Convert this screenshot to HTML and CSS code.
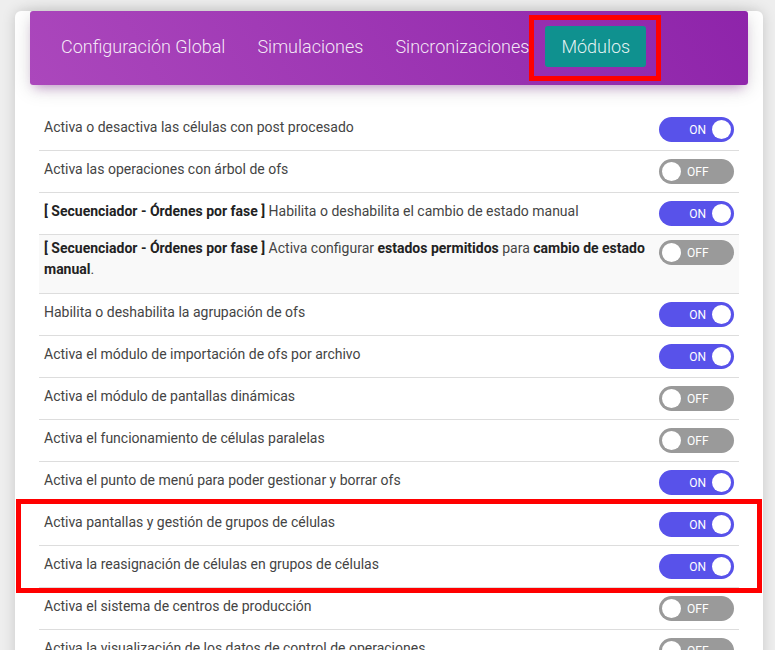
FILE: index.html
```html
<!DOCTYPE html>
<html lang="es">
<head>
<meta charset="utf-8">
<title>Módulos</title>
<link rel="stylesheet" href="styles.css">
</head>
<body>
<div class="card">
  <div class="card-header">
    <nav class="tabs">
      <a class="tab">Configuración Global</a>
      <a class="tab">Simulaciones</a>
      <a class="tab">Sincronizaciones</a>
      <a class="tab active">Módulos<span class="mark mark-tab"></span></a>
    </nav>
  </div>
  <div class="card-body">
    <div class="row"><div class="label">Activa o desactiva las células con post procesado</div><span class="toggle on"><span class="t-text">ON</span><span class="knob"></span></span></div>
    <div class="row"><div class="label">Activa las operaciones con árbol de ofs</div><span class="toggle off"><span class="knob"></span><span class="t-text">OFF</span></span></div>
    <div class="row"><div class="label"><b>[ Secuenciador - Órdenes por fase ]</b> Habilita o deshabilita el cambio de estado manual</div><span class="toggle on"><span class="t-text">ON</span><span class="knob"></span></span></div>
    <div class="row row-tall"><div class="label"><b>[ Secuenciador - Órdenes por fase ]</b> Activa configurar <b>estados permitidos</b> para <b>cambio de estado manual</b>.</div><span class="toggle off"><span class="knob"></span><span class="t-text">OFF</span></span></div>
    <div class="row"><div class="label">Habilita o deshabilita la agrupación de ofs</div><span class="toggle on"><span class="t-text">ON</span><span class="knob"></span></span></div>
    <div class="row"><div class="label">Activa el módulo de importación de ofs por archivo</div><span class="toggle on"><span class="t-text">ON</span><span class="knob"></span></span></div>
    <div class="row"><div class="label">Activa el módulo de pantallas dinámicas</div><span class="toggle off"><span class="knob"></span><span class="t-text">OFF</span></span></div>
    <div class="row"><div class="label">Activa el funcionamiento de células paralelas</div><span class="toggle off"><span class="knob"></span><span class="t-text">OFF</span></span></div>
    <div class="row"><div class="label">Activa el punto de menú para poder gestionar y borrar ofs</div><span class="toggle on"><span class="t-text">ON</span><span class="knob"></span></span></div>
    <div class="group">
      <div class="row"><div class="label">Activa pantallas y gestión de grupos de células</div><span class="toggle on"><span class="t-text">ON</span><span class="knob"></span></span></div>
      <div class="row"><div class="label">Activa la reasignación de células en grupos de células</div><span class="toggle on"><span class="t-text">ON</span><span class="knob"></span></span></div>
      <span class="mark mark-group"></span>
    </div>
    <div class="row"><div class="label">Activa el sistema de centros de producción</div><span class="toggle off"><span class="knob"></span><span class="t-text">OFF</span></span></div>
    <div class="row"><div class="label">Activa la visualización de los datos de control de operaciones</div><span class="toggle off"><span class="knob"></span><span class="t-text">OFF</span></span></div>
  </div>
</div>
</body>
</html>
```
FILE: styles.css
```css
html, body {
  margin: 0;
  padding: 0;
}
body {
  background: #eeeeee;
  font-family: Roboto, "Liberation Sans", Arial, sans-serif;
  padding: 31px 12px 0 15px;
  height: 650px;
  overflow: hidden;
  box-sizing: border-box;
}
.card {
  background: #fff;
  border-radius: 6px;
  box-shadow: 0 0 14px rgba(0, 0, 0, 0.16);
  min-height: 700px;
}
.card-header {
  margin: -20px 15px 0;
  height: 74px;
  box-sizing: border-box;
  padding: 15px 15px 0;
  border-radius: 3px;
  background: linear-gradient(60deg, #ab47bc, #8e24aa);
  box-shadow: 0 4px 20px 0 rgba(0, 0, 0, 0.14), 0 7px 10px -5px rgba(156, 39, 176, 0.4);
}
.tabs {
  display: flex;
  align-items: center;
}
.tab {
  position: relative;
  display: block;
  height: 41px;
  line-height: 41px;
  padding: 0 16px;
  font-size: 18px;
  font-weight: 300;
  color: rgba(255, 255, 255, 0.9);
  border-radius: 3px;
  white-space: nowrap;
}
.tab.active {
  background: #0f918f;
}
.mark {
  position: absolute;
  border: 5px solid #ff0000;
  pointer-events: none;
}
.mark-tab {
  left: -16px;
  right: -15px;
  top: -11px;
  bottom: -14px;
}
.card-body {
  padding: 24px 24px 0;
}
.row {
  display: flex;
  align-items: center;
  justify-content: space-between;
  min-height: 41px;
  padding: 0 5px;
  border-bottom: 1px solid #dddddd;
}
.row-tall {
  align-items: flex-start;
  background: #f9f9f9;
  padding-top: 3px;
  padding-bottom: 13px;
  min-height: 42px;
}
.row-tall .toggle {
  margin-top: 2px;
}
.label {
  font-size: 14px;
  line-height: 21px;
  color: #444444;
  padding-right: 12px;
  padding-bottom: 5px;
}
.row-tall .label {
  padding-bottom: 0;
}
.label b {
  font-weight: 700;
  color: #222222;
}
.group {
  position: relative;
}
.mark-group {
  left: -23px;
  right: -23px;
  top: -5px;
  bottom: -5px;
}
.toggle {
  flex: none;
  display: flex;
  align-items: center;
  width: 75px;
  height: 25px;
  border-radius: 13px;
  box-sizing: border-box;
  padding: 0 3px;
  font-size: 12px;
  color: #fff;
}
.toggle.on {
  background: #5852ea;
  justify-content: flex-end;
}
.toggle.off {
  background: #9a9a9a;
}
.knob {
  width: 19px;
  height: 19px;
  border-radius: 50%;
  background: #fff;
}
.toggle.on .t-text {
  margin-right: 6px;
}
.toggle.off .t-text {
  margin-left: 6px;
}
```
